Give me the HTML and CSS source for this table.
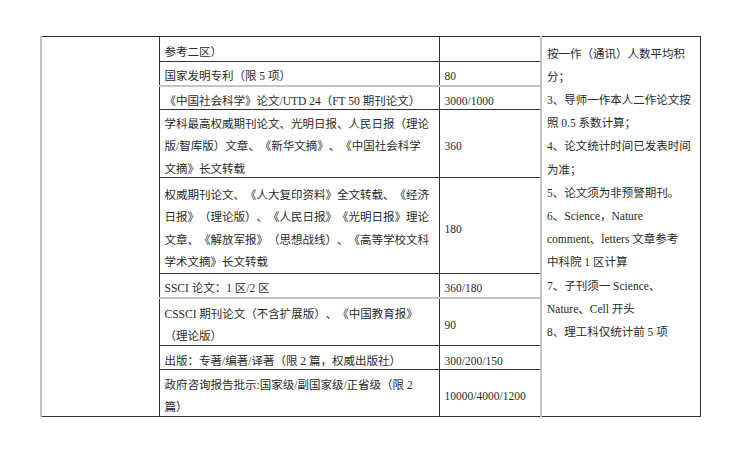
FILE: index.html
```html
<!DOCTYPE html>
<html lang="zh-CN">
<head>
<meta charset="utf-8">
<title>成果认定表</title>
<link rel="stylesheet" href="styles.css">
</head>
<body>
<table class="grid">
  <colgroup>
    <col class="c-blank">
    <col class="c-item">
    <col class="c-score">
    <col class="c-note">
  </colgroup>
  <tbody>
    <tr class="h25">
      <td class="blank" rowspan="9"></td>
      <td class="item"><span class="t">参考二区）</span></td>
      <td class="score"></td>
      <td class="note" rowspan="9">按一作（通讯）人数平均积<br>分；<br>3、导师一作本人二作论文按<br>照 0.5 系数计算；<br>4、论文统计时间已发表时间<br>为准；<br>5、论文须为非预警期刊。<br>6、Science，Nature<br>comment、letters 文章参考<br>中科院 1 区计算<br>7、子刊须一 Science、<br>Nature、Cell 开头<br>8、理工科仅统计前 5 项</td>
    </tr>
    <tr class="h24 soft">
      <td class="item"><span class="t">国家发明专利（限 5 项）</span></td>
      <td class="score"><span class="t">80</span></td>
    </tr>
    <tr class="h24">
      <td class="item"><span class="t">《中国社会科学》论文/UTD 24（FT 50 期刊论文）</span></td>
      <td class="score"><span class="t">3000/1000</span></td>
    </tr>
    <tr class="h68">
      <td class="item"><span class="t">学科最高权威期刊论文、光明日报、人民日报（理论<br>版/智库版）文章、《新华文摘》、《中国社会科学<br>文摘》长文转载</span></td>
      <td class="score"><span class="t">360</span></td>
    </tr>
    <tr class="h96">
      <td class="item"><span class="t">权威期刊论文、《人大复印资料》全文转载、《经济<br>日报》（理论版）、《人民日报》《光明日报》理论<br>文章、《解放军报》（思想战线）、《高等学校文科<br>学术文摘》长文转载</span></td>
      <td class="score"><span class="t">180</span></td>
    </tr>
    <tr class="h24 soft">
      <td class="item"><span class="t">SSCI 论文：1 区/2 区</span></td>
      <td class="score"><span class="t">360/180</span></td>
    </tr>
    <tr class="h48">
      <td class="item"><span class="t">CSSCI 期刊论文（不含扩展版）、《中国教育报》<br>（理论版）</span></td>
      <td class="score"><span class="t">90</span></td>
    </tr>
    <tr class="h24">
      <td class="item"><span class="t">出版：专著/编著/译著（限 2 篇，权威出版社）</span></td>
      <td class="score"><span class="t">300/200/150</span></td>
    </tr>
    <tr class="h47">
      <td class="item"><span class="t">政府咨询报告批示:国家级/副国家级/正省级（限 2<br>篇）</span></td>
      <td class="score"><span class="t">10000/4000/1200</span></td>
    </tr>
  </tbody>
</table>
</body>
</html>
```

FILE: styles.css
```css
html, body {
  margin: 0;
  padding: 0;
  background: #ffffff;
}

body {
  padding: 36px 0 0 40px;
  font-family: "Liberation Serif", "Noto Sans CJK SC", serif;
  font-size: 11.5px;
  color: #2a2a2a;
  text-spacing-trim: space-all;
}

.grid {
  border-collapse: collapse;
  table-layout: fixed;
  width: 659px;
  border-top: 1.5px solid #333;
  border-right: 1.5px solid #333;
  border-bottom: 1.5px solid #333;
  border-left: 2px solid #c4c4c4;
}

.c-blank { width: 118px; }
.c-item { width: 280px; }
.c-score { width: 102px; }
.c-note { width: 159px; }

.grid td {
  border: 1px solid #333;
  padding: 0 5px;
  line-height: 22.4px;
  vertical-align: middle;
  white-space: nowrap;
}

/* glyphs sit slightly low in their line, as in the original typeface */
.grid td .t {
  line-height: 14px;
  vertical-align: -3px;
}

.grid td.blank {
  border-left: 2px solid #c4c4c4;
}

.grid td.note {
  vertical-align: top;
  padding-top: 5.5px;
  line-height: 23.2px;
  border-left: 2px solid #c4c4c4;
}

.grid tr.soft td.item,
.grid tr.soft td.score {
  border-bottom: 2px solid #c4c4c4;
}

.h25 { height: 25px; }
.h24 { height: 24px; }
.h68 { height: 68px; }
.h96 { height: 96px; }
.h48 { height: 48px; }
.h47 { height: 47px; }
```
